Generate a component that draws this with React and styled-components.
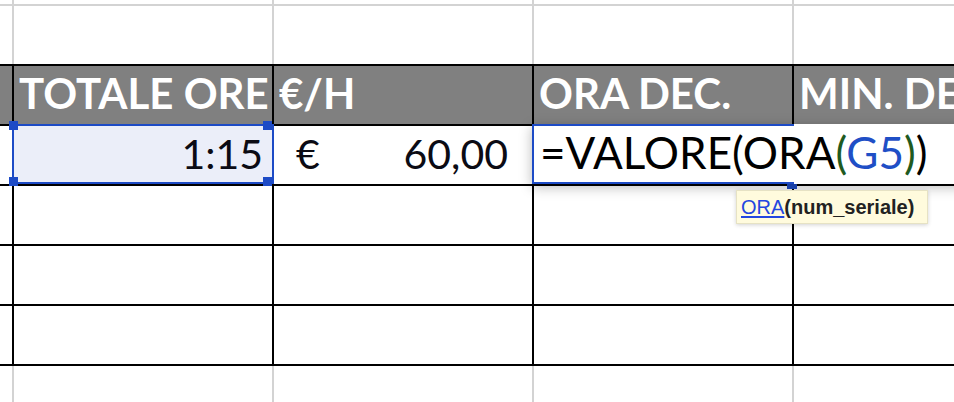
import React from "react";
import styled, { createGlobalStyle } from "styled-components";

const Global = createGlobalStyle`
  html, body { margin: 0; padding: 0; background: #fff; overflow: hidden; }
  #root { width: 954px; height: 402px; }
`;

const BLUE = "#1d4bc6";
const GRID = "#d3d3d3";
const INK = "#000";

const Sheet = styled.div`
  width: 954px;
  height: 402px;
  overflow: hidden;
  font-family: Lato, "Open Sans", sans-serif;
  color: #0b0b14;
`;

const Row = styled.div`
  display: grid;
  grid-template-columns: 12px repeat(4, 260px);
  height: ${(p) => p.$h}px;
  border-top: ${(p) => (p.$top ? `2px solid ${p.$top}` : "none")};
  background: ${(p) => p.$fill || "transparent"};
`;

const Stub = styled.div``;

const Cell = styled.div`
  position: relative;
  box-sizing: border-box;
  border-left: 2px solid ${(p) => p.$line};
  display: flex;
  align-items: center;
  justify-content: ${(p) => p.$justify || "flex-start"};
  padding: ${(p) => p.$pad || "0"};
  background: ${(p) => p.$bg || "transparent"};
  white-space: nowrap;
  z-index: ${(p) => p.$z || "auto"};
`;

const HeaderLabel = styled.span`
  color: #fff;
  font-weight: 700;
  font-size: 42px;
  line-height: 1;
  padding-left: 5px;
  margin-top: -4px;
`;

const Value = styled.span`
  font-size: 41px;
  line-height: 1;
  margin-top: -4px;
`;

const Outline = styled.div`
  position: absolute;
  left: -2px;
  top: -2px;
  width: ${(p) => p.$w}px;
  height: 60px;
  box-sizing: border-box;
  border: 2px solid ${BLUE};
  border-right-width: ${(p) => (p.$open ? 0 : 2)}px;
  pointer-events: none;
  z-index: 3;
`;

const Handle = styled.div`
  position: absolute;
  width: 9px;
  height: 9px;
  background: ${BLUE};
  left: ${(p) => p.$x}px;
  top: ${(p) => p.$y}px;
`;

const EditBox = styled.div`
  position: absolute;
  left: -2px;
  top: -2px;
  width: 600px;
  height: 60px;
  background: #fff;
  box-shadow: 0 3px 12px rgba(0, 0, 0, 0.28);
  display: flex;
  align-items: center;
  padding-left: 8px;
  box-sizing: border-box;
  z-index: 2;
`;

const Formula = styled.span`
  font-size: 44px;
  line-height: 1;
  color: #000;
  margin-top: -4px;
`;

const Tok = styled.span`
  color: ${(p) => p.$c};
`;

const FillHandle = styled.div`
  position: absolute;
  left: 253px;
  top: 58px;
  width: 10px;
  height: 5px;
  background: ${BLUE};
  z-index: 1;
`;

const Tip = styled.div`
  position: absolute;
  left: 202px;
  top: 64px;
  width: 192px;
  height: 34px;
  box-sizing: border-box;
  background: #fffbdd;
  border: 1px solid #e6e2c4;
  box-shadow: 0 1px 4px rgba(0, 0, 0, 0.18);
  display: flex;
  align-items: center;
  padding-left: 4px;
  font-family: "Liberation Sans", Arial, sans-serif;
  font-size: 20px;
  color: #222;
  z-index: 4;
`;

const TipFn = styled.span`
  color: #2346e0;
  text-decoration: underline;
  text-underline-offset: 2px;
`;

const TipArgs = styled.span`
  font-weight: 700;
`;

const blankCols = [0, 1, 2, 3];

function BlankRow({ h, top, line }) {
  return (
    <Row $h={h} $top={top}>
      <Stub />
      {blankCols.map((i) => (
        <Cell key={i} $line={line} />
      ))}
    </Row>
  );
}

export default function App() {
  return (
    <>
      <Global />
      <Sheet>
        <BlankRow h={4} line={GRID} />
        <BlankRow h={58} top={GRID} line={GRID} />
        <Row $h={58} $top={INK} $fill="#808080">
          <Stub />
          <Cell $line={INK}>
            <HeaderLabel>TOTALE ORE</HeaderLabel>
          </Cell>
          <Cell $line={INK}>
            <HeaderLabel>€/H</HeaderLabel>
          </Cell>
          <Cell $line={INK}>
            <HeaderLabel>ORA DEC.</HeaderLabel>
          </Cell>
          <Cell $line={INK}>
            <HeaderLabel>MIN. DEC.</HeaderLabel>
          </Cell>
        </Row>
        <Row $h={58} $top={INK}>
          <Stub />
          <Cell $line={INK} $bg="#ebeef9" $justify="flex-end" $pad="0 9px 0 0" $z={3}>
            <Value>1:15</Value>
            <Outline $w={262}>
              <Handle $x={-5} $y={-5} />
              <Handle $x={249} $y={-5} />
              <Handle $x={-5} $y={51} />
              <Handle $x={249} $y={51} />
            </Outline>
          </Cell>
          <Cell $line={INK} $justify="space-between" $pad="0 24px 0 22px">
            <Value>€</Value>
            <Value>60,00</Value>
          </Cell>
          <Cell $line={INK} $z={5}>
            <FillHandle />
            <EditBox>
              <Formula>
                =VALORE(ORA<Tok $c="#1f5a1f">(</Tok>
                <Tok $c="#1f4fc6">G5</Tok>
                <Tok $c="#1f5a1f">)</Tok>)
              </Formula>
            </EditBox>
            <Outline $w={262} $open />
            <Tip>
              <TipFn>ORA</TipFn>
              <TipArgs>(num_seriale)</TipArgs>
            </Tip>
          </Cell>
          <Cell $line={INK} />
        </Row>
        <BlankRow h={58} top={INK} line={INK} />
        <BlankRow h={58} top={INK} line={INK} />
        <BlankRow h={58} top={INK} line={INK} />
        <BlankRow h={60} top={INK} line={GRID} />
      </Sheet>
    </>
  );
}
